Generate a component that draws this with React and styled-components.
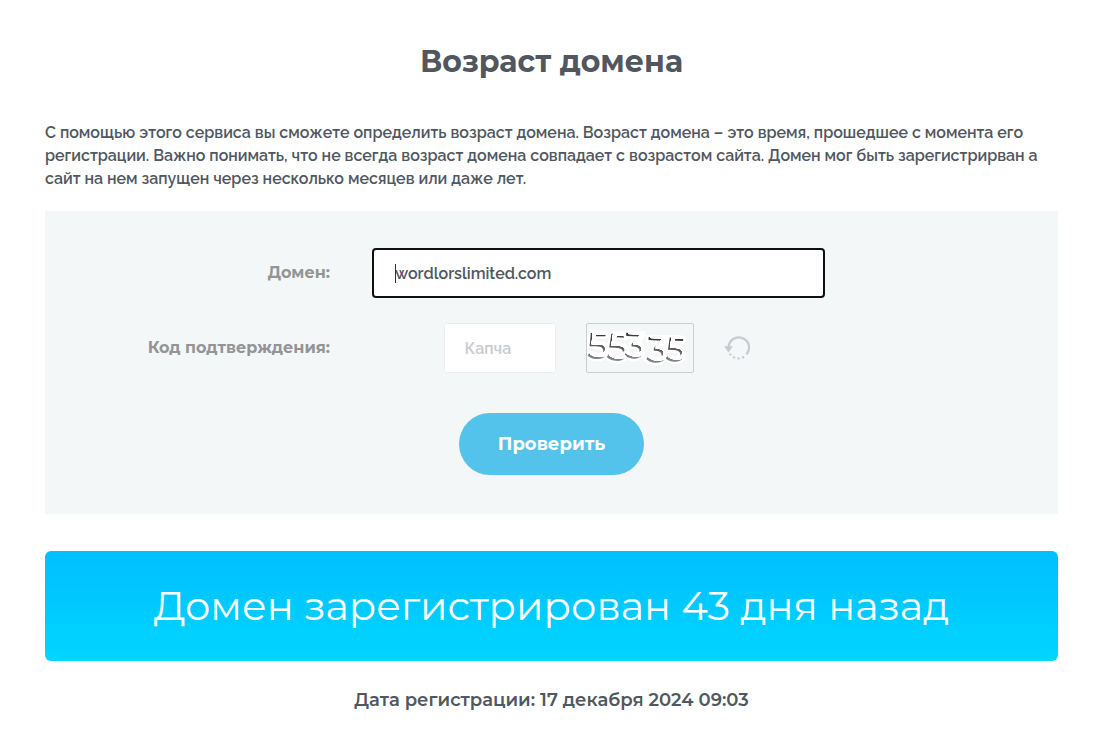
import { useState } from 'react';
import styled, { createGlobalStyle } from 'styled-components';

const GlobalStyle = createGlobalStyle`
  * {
    box-sizing: border-box;
  }
  body {
    margin: 0;
    background: #fff;
    color: #50575f;
    font-family: Raleway, Inter, 'Open Sans', sans-serif;
    font-size: 16px;
    font-weight: 600;
    line-height: 23px;
  }
`;

const headingFont = "Montserrat, Inter, 'Open Sans', sans-serif";

const Page = styled.main`
  padding: 40px 39px 16px 45px;
`;

const Title = styled.h1`
  margin: 0 0 38px;
  font-family: ${headingFont};
  font-size: 30px;
  font-weight: 700;
  line-height: 43px;
  text-align: center;
`;

const Description = styled.p`
  margin: 0 0 21px;
  font-size: 16px;
`;

const CheckForm = styled.form`
  display: flex;
  flex-direction: column;
  gap: 25px;
  padding: 37px 0 39px;
  background: #f3f7f8;
`;

const Row = styled.div`
  display: grid;
  grid-template-columns: 285fr 453fr 191fr;
  column-gap: 42px;
  align-items: center;
`;

const Label = styled.label`
  padding-bottom: 2px;
  color: #949494;
  font-family: ${headingFont};
  font-weight: 700;
  text-align: right;
  white-space: nowrap;
`;

const InputWrap = styled.div`
  position: relative;
`;

const Input = styled.input`
  display: block;
  width: ${({ $width }) => $width || '100%'};
  height: 50px;
  padding: 0 20px;
  border: 1px solid #eceef0;
  border-radius: 3px;
  background: #fff;
  color: #50575f;
  font: inherit;
  outline: none;

  &::placeholder {
    color: #c7cad1;
    opacity: 1;
  }
`;

const DomainInput = styled(Input)`
  padding: 0 21px;
  border: 2px solid #101010;
  border-radius: 4px;
  caret-color: transparent;
`;

const Caret = styled.span`
  position: absolute;
  top: 16px;
  left: 23px;
  width: 1px;
  height: 19px;
  background: #333;
`;

const CaptchaGroup = styled.div`
  display: flex;
  align-items: center;
  justify-content: center;
  gap: 30px;
  padding-right: 4px;
`;

const CaptchaImage = styled.svg`
  flex: none;
  width: 108px;
  height: 50px;
  border: 1px solid #cccfd2;
  border-radius: 2px;
`;

const Digit = styled.text`
  fill: url(#ink);
  stroke: #fff;
  stroke-width: 5px;
  stroke-linejoin: round;
  paint-order: stroke;
  font-family: ${headingFont};
  font-weight: 500;
`;

const RefreshButton = styled.button`
  flex: none;
  width: 26px;
  height: 26px;
  padding: 0;
  border: 0;
  background: none;
  cursor: pointer;

  svg {
    display: block;
  }
`;

const SubmitButton = styled.button`
  align-self: center;
  height: 62px;
  margin-top: 15px;
  padding: 0 39px;
  border: 0;
  border-radius: 31px;
  background: #54c3ec;
  color: #fff;
  font-family: ${headingFont};
  font-size: 18px;
  font-weight: 700;
  cursor: pointer;
`;

const Result = styled.div`
  margin: 37px 0 27px;
  padding: 30px 20px;
  border-radius: 6px;
  background: linear-gradient(#00bfff, #00d5ff);
  color: #fff;
  font-family: ${headingFont};
  font-size: 40px;
  font-weight: 400;
  line-height: 50px;
  text-align: center;
`;

const RegDate = styled.p`
  margin: 0;
  font-family: ${headingFont};
  font-size: 18px;
  font-weight: 600;
  line-height: 24px;
  text-align: center;
`;

const digits = [
  { char: '5', x: 0, y: 35, size: 37, angle: 0 },
  { char: '5', x: 19, y: 36, size: 38, angle: 3 },
  { char: '3', x: 37, y: 34, size: 36, angle: 2 },
  { char: '3', x: 59, y: 38, size: 36, angle: 3 },
  { char: '5', x: 78, y: 37, size: 34, angle: 3 },
];

const Captcha = () => (
  <CaptchaImage viewBox="0 0 106 48" role="img" aria-label="Код с картинки">
    <defs>
      <linearGradient id="ink" x1="0" y1="0" x2="0" y2="1">
        <stop offset="0.2" stopColor="#333" />
        <stop offset="0.8" stopColor="#888" />
      </linearGradient>
      {/* the ink keeps its edge, a soft white copy covers the rest */}
      <filter id="emboss" x="-10%" y="-10%" width="120%" height="120%">
        <feColorMatrix
          in="SourceGraphic"
          result="cover"
          values="0 0 0 0 1  0 0 0 0 1  0 0 0 0 1  -3 0 0 3 0"
        />
        <feOffset in="cover" dx="2" dy="-2" result="shifted" />
        <feGaussianBlur in="shifted" stdDeviation="0.5" result="soft" />
        <feMerge>
          <feMergeNode in="SourceGraphic" />
          <feMergeNode in="soft" />
        </feMerge>
      </filter>
    </defs>
    <g filter="url(#emboss)">
      {digits.map(({ char, x, y, size, angle }) => (
        <Digit
          key={x}
          x={x}
          y={y}
          fontSize={size}
          transform={`rotate(${angle} ${x} ${y})`}
        >
          {char}
        </Digit>
      ))}
    </g>
  </CaptchaImage>
);

const RefreshIcon = () => (
  <svg width="26" height="26" viewBox="0 0 26 26" fill="none" aria-hidden="true">
    <path
      d="M4.6 12.5A10.2 10.2 0 1 1 23 18.6"
      stroke="#c7cbd1"
      strokeWidth="2.2"
      strokeLinecap="round"
    />
    <path d="M0 11.2h8.8L4.6 17.4z" fill="#c7cbd1" />
    <g fill="#c7cbd1">
      <circle cx="6.3" cy="19.6" r="1.2" />
      <circle cx="10" cy="22.4" r="1.2" />
      <circle cx="14.5" cy="23.4" r="1.2" />
      <circle cx="19" cy="22.2" r="1.2" />
    </g>
  </svg>
);

const App = () => {
  const [domain, setDomain] = useState('wordlorslimited.com');
  const [code, setCode] = useState('');

  return (
    <>
      <GlobalStyle />
      <Page>
        <Title>Возраст домена</Title>
        <Description>
          С помощью этого сервиса вы сможете определить возраст домена. Возраст
          домена – это время, прошедшее с момента его регистрации. Важно
          понимать, что не всегда возраст домена совпадает с возрастом сайта.
          Домен мог быть зарегистрирван а сайт на нем запущен через несколько
          месяцев или даже лет.
        </Description>

        <CheckForm onSubmit={e => e.preventDefault()}>
          <Row>
            <Label htmlFor="domain">Домен:</Label>
            <InputWrap>
              <DomainInput
                id="domain"
                name="domain"
                type="text"
                value={domain}
                onChange={e => setDomain(e.target.value)}
              />
              <Caret />
            </InputWrap>
          </Row>
          <Row>
            <Label htmlFor="code">Код подтверждения:</Label>
            <CaptchaGroup>
              <Input
                id="code"
                name="code"
                type="text"
                placeholder="Капча"
                $width="112px"
                value={code}
                onChange={e => setCode(e.target.value)}
              />
              <Captcha />
              <RefreshButton type="button" aria-label="Обновить код">
                <RefreshIcon />
              </RefreshButton>
            </CaptchaGroup>
          </Row>
          <SubmitButton type="submit">Проверить</SubmitButton>
        </CheckForm>

        <Result>Домен зарегистрирован 43 дня назад</Result>
        <RegDate>Дата регистрации: 17 декабря 2024 09:03</RegDate>
      </Page>
    </>
  );
};

export default App;
